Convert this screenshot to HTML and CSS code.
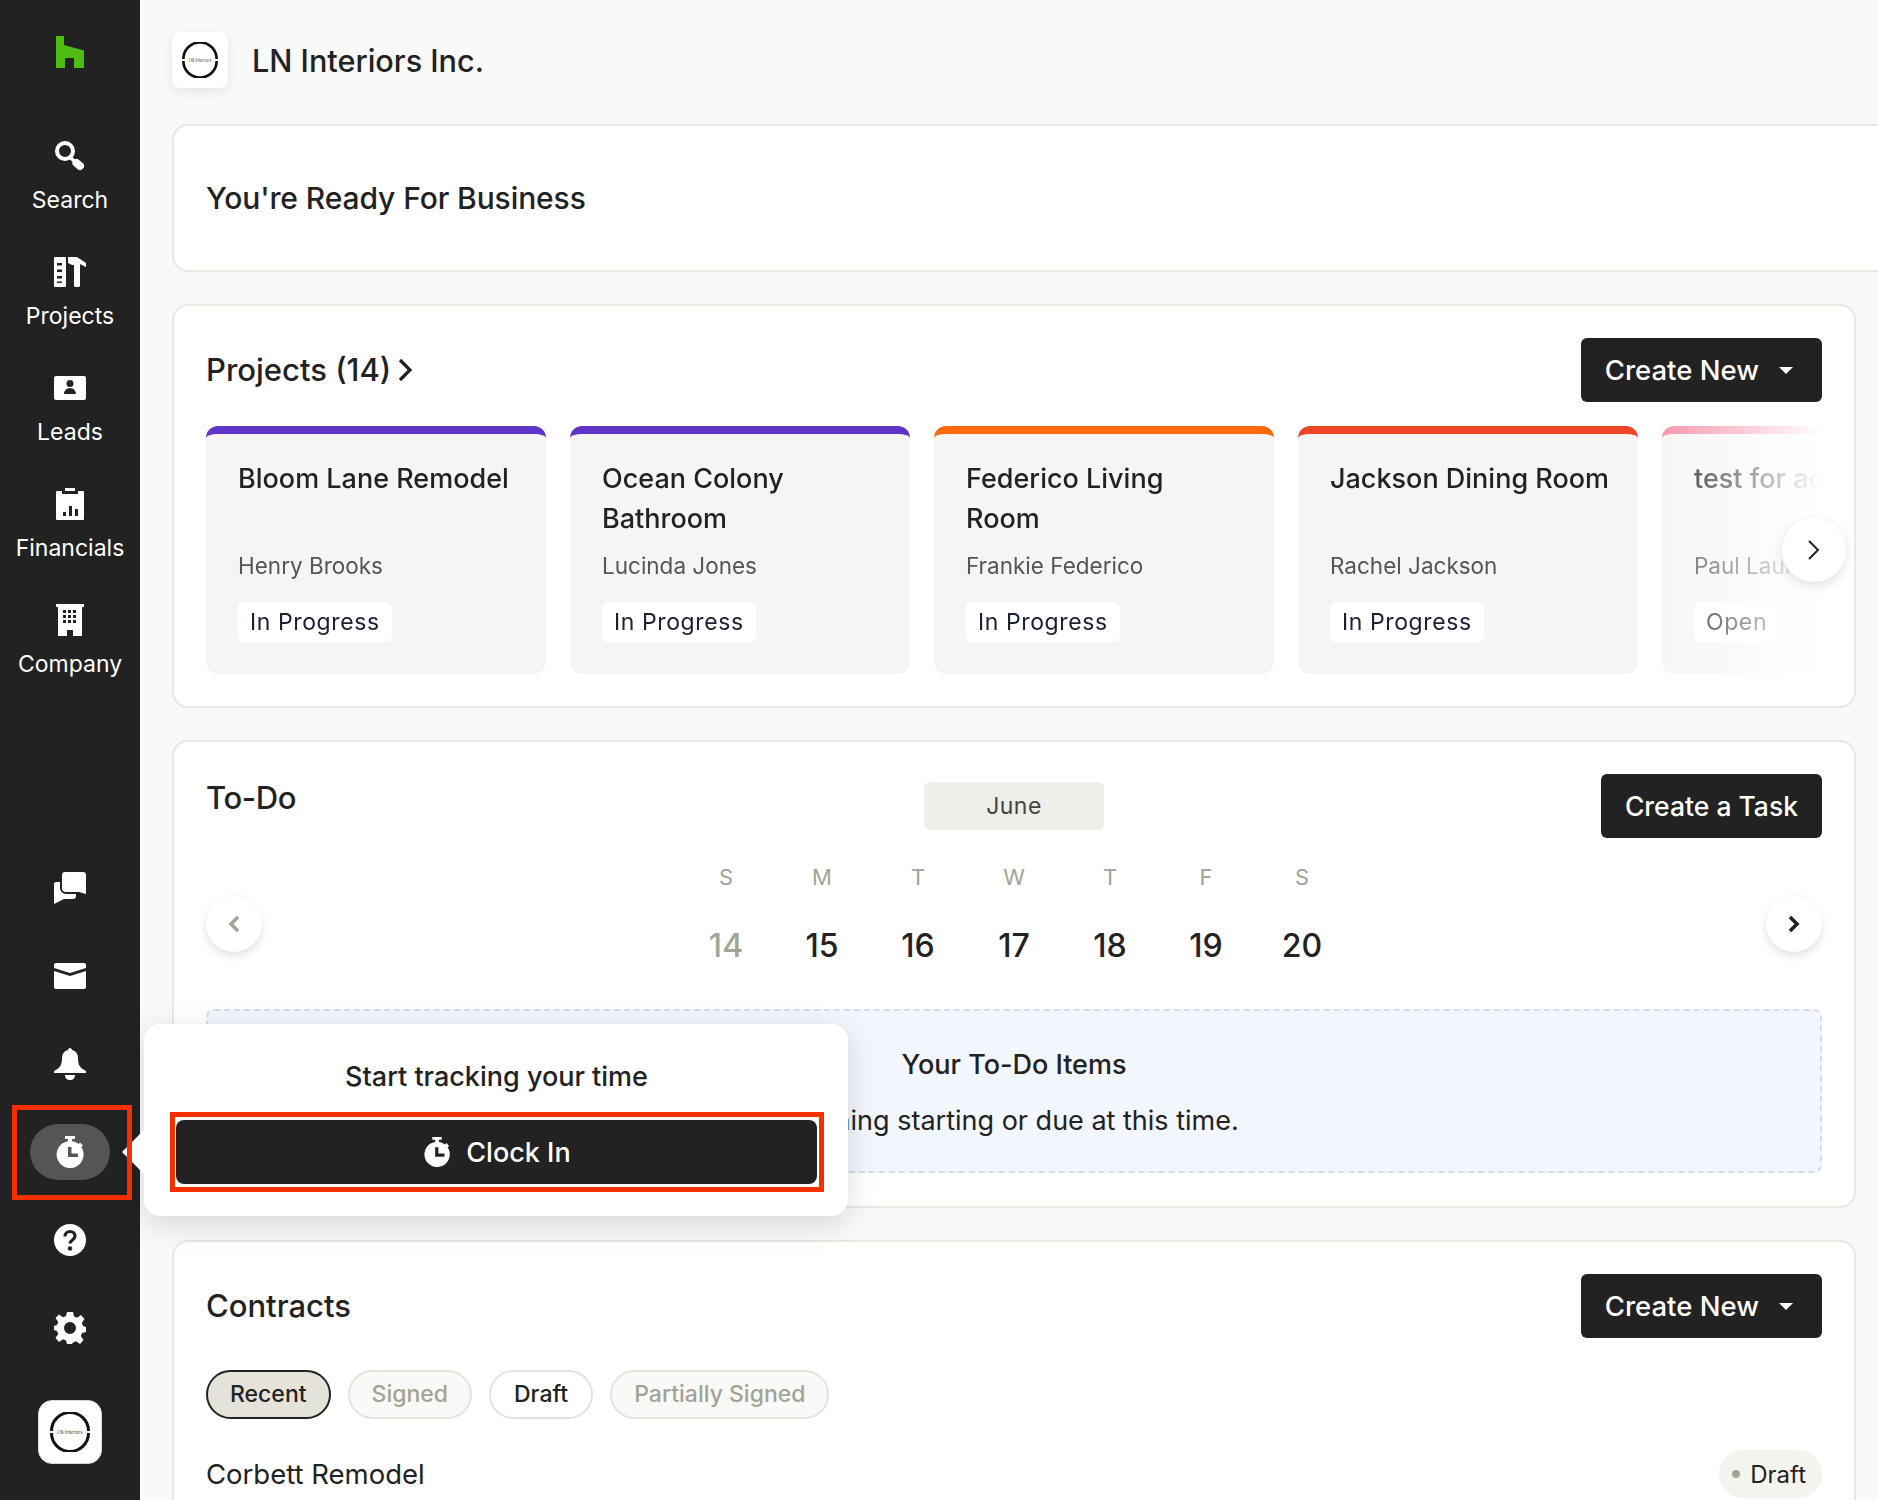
FILE: index.html
```html
<!DOCTYPE html>
<html lang="en">
<head>
    <meta charset="UTF-8">
    <meta name="viewport" content="width=device-width, initial-scale=1.0">
    <title>LN Interiors Inc.</title>
    <link rel="stylesheet" href="styles.css">
</head>
<body>
    <aside class="sidebar">
        <a class="brand">
            <svg width="28" height="32" viewBox="0 0 28 32"><path fill="#4dbc15" d="M0 0h8v9l20 5.500V32H18V22H9v10H0z"/></svg>
        </a>
        <nav class="main-nav">
            <a class="nav-item">
                <svg class="icon" viewBox="0 0 32 32"><circle cx="11" cy="11" r="8" fill="none" stroke="#fff" stroke-width="4"/><path d="M16 17l6 6" stroke="#fff" stroke-width="3.500"/><path d="M22.500 23l3.500 3" stroke="#fff" stroke-width="8" stroke-linecap="round"/></svg>
                <span>Search</span>
            </a>
            <a class="nav-item">
                <svg class="icon" viewBox="0 0 32 32"><path fill="#fff" fill-rule="evenodd" d="M1 1h10a1 1 0 0 1 1 1v28a1 1 0 0 1-1 1H1a1 1 0 0 1-1-1V2a1 1 0 0 1 1-1zm2 6v2.500h5V7zm0 6.500V16h5v-2.500zM3 20v2.500h5V20zm0 5.500V27h5v-1.500z"/><path fill="#fff" d="M14 1h9l9 6v4l-6-3v22a2 2 0 0 1-2 1h-2a2 2 0 0 1-2-1V9h-2l-4-2z"/></svg>
                <span>Projects</span>
            </a>
            <a class="nav-item">
                <svg class="icon" viewBox="0 0 32 32"><path fill="#fff" fill-rule="evenodd" d="M2 4h28a2 2 0 0 1 2 2v20a2 2 0 0 1-2 2H2a2 2 0 0 1-2-2V6a2 2 0 0 1 2-2zm14 4a3.500 3.500 0 1 0 0 7 3.500 3.500 0 0 0 0-7zm-6 14h12c0-3-2.500-6-6-6s-6 3-6 6z"/></svg>
                <span>Leads</span>
            </a>
            <a class="nav-item">
                <svg class="icon" viewBox="0 0 32 32"><path fill="#fff" fill-rule="evenodd" d="M3 3h5v3h16V3h5a1 1 0 0 1 1 1v27a1 1 0 0 1-1 1H3a1 1 0 0 1-1-1V4a1 1 0 0 1 1-1zm8 0V0h10v3zm-2 21v4h3v-4zm6-6v10h3V18zm6 3v7h3v-7z"/></svg>
                <span>Financials</span>
            </a>
            <a class="nav-item">
                <svg class="icon" viewBox="0 0 32 32"><path fill="#fff" fill-rule="evenodd" d="M2 0h28v3h-2v29H19v-6h-6v6H4V3H2zm7 6v3h3V6zm5 0v3h3V6zm5 0v3h3V6zm-10 5v3h3v-3zm5 0v3h3v-3zm5 0v3h3v-3zM9 16v3h3v-3zm5 0v3h3v-3zm5 0v3h3v-3z"/></svg>
                <span>Company</span>
            </a>
        </nav>
        <div class="tools-nav">
            <a class="tool-item">
                <svg class="icon" viewBox="0 0 32 32"><path fill="#fff" d="M8 3a3 3 0 0 1 3-3h18a3 3 0 0 1 3 3v19l-7-2H12a4 4 0 0 1-4-4z"/><path fill="#fff" d="M0 32V12a2 2 0 0 1 2-2h4v6a6 6 0 0 0 6 6h10v2a3 3 0 0 1-3 3H10z"/></svg>
            </a>
            <a class="tool-item">
                <svg class="icon" viewBox="0 0 32 32"><path fill="#fff" d="M2 3h28a2 2 0 0 1 2 2v3l-16 5L0 8V5a2 2 0 0 1 2-2z"/><path fill="#fff" d="M0 11l16 5 16-5v16a2 2 0 0 1-2 2H2a2 2 0 0 1-2-2z"/></svg>
            </a>
            <a class="tool-item">
                <svg class="icon" viewBox="0 0 32 32"><path fill="#fff" d="M16 0c1 0 2 1 2 2 4 1 6 4 6 8 0 7 2 10 8 13v2H0v-2c6-3 8-6 8-13 0-4 2-7 6-8 0-1 1-2 2-2z"/><path fill="#fff" d="M11 27h10c0 3-2 5-5 5s-5-2-5-5z"/></svg>
            </a>
            <a class="tool-item">
                <span class="timer-pill">
                    <svg class="icon" viewBox="0 0 32 32"><path fill="#fff" fill-rule="evenodd" d="M11 0h10v3h-3v2.200c2.500.3 4.800 1.300 6.600 2.800L26 6.500l3 3-1.700 1.500A13.500 13.500 0 1 1 14 5.200V3h-3zm3 11v10h10v-3.500h-6.500V11z"/></svg>
                </span>
            </a>
            <a class="tool-item">
                <svg class="icon" viewBox="0 0 32 32"><circle cx="16" cy="16" r="16" fill="#fff"/><path d="M11 12.500c0-3 2.200-5 5-5s5 2 5 4.500c0 4-5 4-5 7.500" fill="none" stroke="#222" stroke-width="3.200"/><circle cx="16" cy="24.500" r="2.200" fill="#222"/></svg>
            </a>
            <a class="tool-item">
                <svg class="icon" viewBox="0 0 32 32"><path fill="#fff" fill-rule="evenodd" d="M13 0h6l1 4.500 3 1.200L27 3l3.500 4-2.700 4 1.200 3L32 15v5l-4 1-1.200 3 2.700 4-3.500 4-4-2.700-3 1.200L18 32h-5l-1-3.500-3-1.200L5 30l-3.500-4 2.700-4-1.200-3L0 18v-4l3-1 1.200-3-2.700-4L5 2.500l4 2.700 3-1.200zm3 10a6 6 0 1 0 0 12 6 6 0 0 0 0-12z"/></svg>
            </a>
        </div>
        <div class="account-logo">
            <svg width="40" height="40" viewBox="0 0 40 40"><path d="M1.500 19a18.500 18.500 0 0 1 37 0M1.500 21a18.500 18.500 0 0 0 37 0" fill="none" stroke="#111" stroke-width="3"/><text x="20" y="21.700" text-anchor="middle" class="logo-text">LN Interiors</text></svg>
        </div>
        <div class="highlight highlight-timer"></div>
    </aside>

    <main class="content">
        <header class="company-header">
            <div class="company-logo">
                <svg width="36" height="36" viewBox="0 0 40 40"><path d="M1.500 19a18.500 18.500 0 0 1 37 0M1.500 21a18.500 18.500 0 0 0 37 0" fill="none" stroke="#111" stroke-width="3"/><text x="20" y="21.700" text-anchor="middle" class="logo-text">LN Interiors</text></svg>
            </div>
            <h1>LN Interiors Inc.</h1>
        </header>

        <section class="panel ready-panel">
            <h2>You're Ready For Business</h2>
        </section>

        <section class="panel projects-panel">
            <div class="panel-head">
                <h2 class="projects-title">Projects (14)
                    <svg width="16" height="26" viewBox="0 0 16 26"><path d="M3 3l10 10L3 23" fill="none" stroke="#222" stroke-width="3.200"/></svg>
                </h2>
                <button class="btn-dark">Create New <span class="caret"></span></button>
            </div>
            <div class="project-rail">
                <article class="project-card bar-purple">
                    <h3>Bloom Lane Remodel</h3>
                    <p class="client">Henry Brooks</p>
                    <span class="status">In Progress</span>
                </article>
                <article class="project-card bar-purple">
                    <h3>Ocean Colony Bathroom</h3>
                    <p class="client">Lucinda Jones</p>
                    <span class="status">In Progress</span>
                </article>
                <article class="project-card bar-orange">
                    <h3>Federico Living<br>Room</h3>
                    <p class="client">Frankie Federico</p>
                    <span class="status">In Progress</span>
                </article>
                <article class="project-card bar-red">
                    <h3>Jackson Dining Room</h3>
                    <p class="client">Rachel Jackson</p>
                    <span class="status">In Progress</span>
                </article>
                <article class="project-card bar-pink">
                    <h3>test for account</h3>
                    <p class="client">Paul Lauren</p>
                    <span class="status">Open</span>
                </article>
            </div>
            <button class="rail-next">
                <svg width="14" height="22" viewBox="0 0 14 22"><path d="M2 2l9 9-9 9" fill="none" stroke="#222" stroke-width="2"/></svg>
            </button>
        </section>

        <section class="panel todo-panel">
            <div class="todo-head">
                <h2>To-Do</h2>
                <div class="month">June</div>
                <button class="btn-dark task-btn">Create a Task</button>
            </div>
            <div class="calendar">
                <button class="round-btn">
                    <svg width="14" height="20" viewBox="0 0 14 20"><path d="M11 3l-7 7 7 7" fill="none" stroke="#a3a396" stroke-width="3.600"/></svg>
                </button>
                <div class="days">
                    <div class="day muted"><span>S</span><b>14</b></div>
                    <div class="day"><span>M</span><b>15</b></div>
                    <div class="day"><span>T</span><b>16</b></div>
                    <div class="day"><span>W</span><b>17</b></div>
                    <div class="day"><span>T</span><b>18</b></div>
                    <div class="day"><span>F</span><b>19</b></div>
                    <div class="day"><span>S</span><b>20</b></div>
                </div>
                <button class="round-btn">
                    <svg width="14" height="20" viewBox="0 0 14 20"><path d="M3 3l7 7-7 7" fill="none" stroke="#222" stroke-width="3.600"/></svg>
                </button>
            </div>
            <div class="todo-empty">
                <h4>Your To-Do Items</h4>
                <p>Nothing starting or due at this time.</p>
            </div>
        </section>

        <section class="panel contracts-panel">
            <div class="panel-head">
                <h2>Contracts</h2>
                <button class="btn-dark">Create New <span class="caret"></span></button>
            </div>
            <div class="chips">
                <span class="chip chip-active">Recent</span>
                <span class="chip chip-off">Signed</span>
                <span class="chip chip-draft">Draft</span>
                <span class="chip chip-off">Partially Signed</span>
            </div>
            <div class="contract-row">
                <span>Corbett Remodel</span>
                <span class="draft-tag"><i></i>Draft</span>
            </div>
        </section>
    </main>

    <div class="clock-popover">
        <h5>Start tracking your time</h5>
        <button class="clock-btn">
            <svg width="30" height="30" viewBox="0 0 32 32"><path fill="#fff" fill-rule="evenodd" d="M11 0h10v3h-3v2.200c2.500.3 4.800 1.300 6.600 2.800L26 6.500l3 3-1.700 1.500A13.500 13.500 0 1 1 14 5.200V3h-3zm3 11v10h10v-3.500h-6.500V11z"/></svg>
            Clock In
        </button>
        <div class="highlight highlight-clock"></div>
    </div>
</body>
</html>
```

FILE: styles.css
```css
* {
    box-sizing: border-box;
}
html, body {
    height: 1500px;
}
body {
    font-family: Inter, "Open Sans", sans-serif;
    background-color: #f9f9f7;
    color: #222;
    margin: 0;
    display: flex;
    overflow: hidden;
    position: relative;
}
h1, h2, h3, h4, h5, p {
    margin: 0;
    font-weight: 500;
}
button {
    font-family: inherit;
    border: none;
    cursor: pointer;
}
.icon {
    width: 32px;
    height: 32px;
    display: block;
}
.logo-text {
    font-size: 4.600px;
    fill: #444;
}

/* sidebar */
.sidebar {
    width: 140px;
    flex: none;
    height: 1500px;
    background-color: #222;
    color: #fff;
    display: flex;
    flex-direction: column;
    align-items: center;
    padding: 36px 0 36px;
    position: relative;
}
.brand {
    height: 32px;
}
.main-nav {
    margin-top: 72px;
}
.nav-item {
    height: 116px;
    display: flex;
    flex-direction: column;
    align-items: center;
    gap: 12px;
    font-size: 23px;
    line-height: 32px;
    font-weight: 400;
}
.tools-nav {
    margin-top: auto;
}
.tool-item {
    height: 88px;
    display: flex;
    align-items: center;
    justify-content: center;
}
.timer-pill {
    width: 80px;
    height: 56px;
    border-radius: 28px;
    background-color: #555;
    display: flex;
    align-items: center;
    justify-content: center;
}
.account-logo {
    width: 64px;
    height: 64px;
    margin-top: 28px;
    background: #fff;
    border: 1px solid #d8d8cf;
    border-radius: 14px;
    display: flex;
    align-items: center;
    justify-content: center;
}
.highlight {
    position: absolute;
    border: 5px solid #f52f00;
    pointer-events: none;
    z-index: 2;
}
.highlight-timer {
    left: 12px;
    top: 1105px;
    width: 120px;
    height: 95px;
}

/* main column */
.content {
    flex: 1;
    min-width: 0;
    padding: 32px 22px 0 32px;
}
.company-header {
    display: flex;
    align-items: center;
    gap: 24px;
    margin-bottom: 36px;
}
.company-logo {
    width: 56px;
    height: 56px;
    background: #fff;
    border-radius: 8px;
    box-shadow: 0 4px 12px rgba(0, 0, 0, 0.08);
    display: flex;
    align-items: center;
    justify-content: center;
}
.company-header h1 {
    font-size: 30.600px;
}
.panel {
    background: #fff;
    border: 2px solid #e8e8e0;
    border-radius: 16px;
    padding: 32px;
    margin-bottom: 32px;
    position: relative;
}
.panel h2 {
    font-size: 31px;
    line-height: 40px;
}
.ready-panel {
    height: 148px;
    margin-right: -80px;
    display: flex;
    align-items: center;
}
.ready-panel h2 {
    font-size: 30px;
    letter-spacing: -0.1px;
}
.panel-head {
    display: flex;
    align-items: center;
    justify-content: space-between;
}
.projects-panel {
    height: 404px;
}
.projects-title {
    display: flex;
    align-items: center;
    gap: 6px;
}
.btn-dark {
    background-color: #222;
    color: #fff;
    height: 64px;
    border-radius: 6px;
    padding: 0 29px 0 24px;
    font-size: 27.500px;
    font-weight: 500;
    display: flex;
    align-items: center;
    gap: 20px;
}
.caret {
    width: 0;
    height: 0;
    border-left: 7px solid transparent;
    border-right: 7px solid transparent;
    border-top: 7px solid #fff;
}

/* project cards */
.project-rail {
    display: flex;
    gap: 24px;
    margin-top: 24px;
    overflow: hidden;
    -webkit-mask-image: linear-gradient(to right, #000 1440px, transparent 1616px);
    mask-image: linear-gradient(to right, #000 1440px, transparent 1616px);
}
.project-card {
    flex: none;
    width: 340px;
    height: 248px;
    background-color: #f6f5f3;
    border-top: 8px solid #5f35c9;
    border-radius: 12px;
    padding: 25px 20px 0 32px;
}
.bar-purple {
    border-top-color: #5f35c9;
}
.bar-orange {
    border-top-color: #f96a0c;
}
.bar-red {
    border-top-color: #ef4628;
}
.bar-pink {
    border-top-color: #f78da7;
}
.project-card h3 {
    font-size: 27px;
    line-height: 40px;
    height: 80px;
}
.client {
    font-size: 22.500px;
    line-height: 34px;
    margin-top: 10px;
    font-weight: 400;
    color: #555;
}
.status {
    display: inline-block;
    margin: 19px 0 0 0;
    background: #fff;
    border-radius: 6px;
    height: 40px;
    line-height: 40px;
    padding: 0 12px;
    font-size: 23px;
    letter-spacing: 0.6px;
    font-weight: 400;
    color: #1a2033;
}
.rail-next {
    position: absolute;
    right: 8px;
    top: 212px;
    width: 64px;
    height: 64px;
    border-radius: 50%;
    background: #fff;
    box-shadow: 0 4px 12px rgba(0, 0, 0, 0.12);
    display: flex;
    align-items: center;
    justify-content: center;
}

/* to-do */
.todo-panel {
    height: 468px;
}
.todo-head {
    display: grid;
    grid-template-columns: 1fr 180px 1fr;
    align-items: center;
}
.todo-head h2 {
    margin-top: -16px;
    letter-spacing: -0.4px;
}
.month {
    height: 48px;
    line-height: 48px;
    text-align: center;
    background-color: #efefe9;
    border-radius: 6px;
    font-size: 23px;
    letter-spacing: 0.5px;
    font-weight: 400;
    color: #444;
}
.task-btn {
    justify-self: end;
    padding: 0 24px;
    font-size: 26.500px;
}
.calendar {
    display: flex;
    justify-content: space-between;
    margin-top: 20px;
}
.round-btn {
    width: 56px;
    height: 56px;
    margin-top: 38px;
    border-radius: 50%;
    background: #fff;
    box-shadow: 0 4px 10px rgba(0, 0, 0, 0.12);
    display: flex;
    align-items: center;
    justify-content: center;
}
.days {
    display: flex;
}
.day {
    width: 96px;
    display: flex;
    flex-direction: column;
    align-items: center;
}
.day span {
    font-size: 22px;
    line-height: 38px;
    color: #a3a396;
}
.day b {
    margin-top: 28px;
    font-size: 32px;
    line-height: 44px;
    font-weight: 500;
}
.day.muted b {
    color: #a3a396;
}
.todo-empty {
    margin-top: 41px;
    height: 164px;
    background-color: #f2f6fd;
    border: 2px dashed #d5dcec;
    border-radius: 8px;
    padding-top: 36px;
    text-align: center;
}
.todo-empty h4 {
    font-size: 27px;
    line-height: 36px;
}
.todo-empty p {
    margin-top: 20px;
    font-size: 27px;
    line-height: 36px;
    font-weight: 400;
}

/* contracts */
.chips {
    display: flex;
    gap: 17px;
    margin-top: 32px;
}
.chip {
    height: 49px;
    line-height: 45px;
    padding: 0 22px;
    border: 2px solid #e5e4db;
    border-radius: 25px;
    font-size: 23px;
    font-weight: 500;
    background: #fff;
}
.chip-active {
    background-color: #e5e3d9;
    border-color: #222;
}
.chip-off {
    background-color: #f9f9f7;
    color: #a3a396;
}
.chip-draft {
    padding: 0 23px;
}
.contract-row {
    display: flex;
    align-items: center;
    justify-content: space-between;
    margin-top: 31px;
    font-size: 27.500px;
    font-weight: 400;
}
.draft-tag {
    height: 48px;
    padding: 0 16px 0 13px;
    border-radius: 24px;
    background-color: #f4f4ef;
    display: flex;
    align-items: center;
    gap: 10px;
    font-size: 24px;
}
.draft-tag i {
    width: 8px;
    height: 8px;
    border-radius: 50%;
    background-color: #a3a396;
}

/* clock in popover */
.clock-popover {
    position: absolute;
    left: 144px;
    top: 1024px;
    width: 704px;
    height: 192px;
    background: #fff;
    border-radius: 16px;
    box-shadow: 0 8px 32px rgba(0, 0, 0, 0.14);
    padding: 35px 31px 0 32px;
    text-align: center;
    z-index: 1;
}
.clock-popover::before {
    content: "";
    position: absolute;
    left: -22px;
    top: 106px;
    border-top: 22px solid transparent;
    border-bottom: 22px solid transparent;
    border-right: 22px solid #fff;
}
.clock-popover h5 {
    font-size: 27px;
    line-height: 36px;
}
.clock-btn {
    margin-top: 25px;
    width: 100%;
    height: 64px;
    background-color: #222;
    color: #fff;
    border-radius: 8px;
    font-size: 27px;
    font-weight: 500;
    display: flex;
    align-items: center;
    justify-content: center;
    gap: 14px;
}
.highlight-clock {
    left: 26px;
    top: 88px;
    width: 654px;
    height: 80px;
}
```
